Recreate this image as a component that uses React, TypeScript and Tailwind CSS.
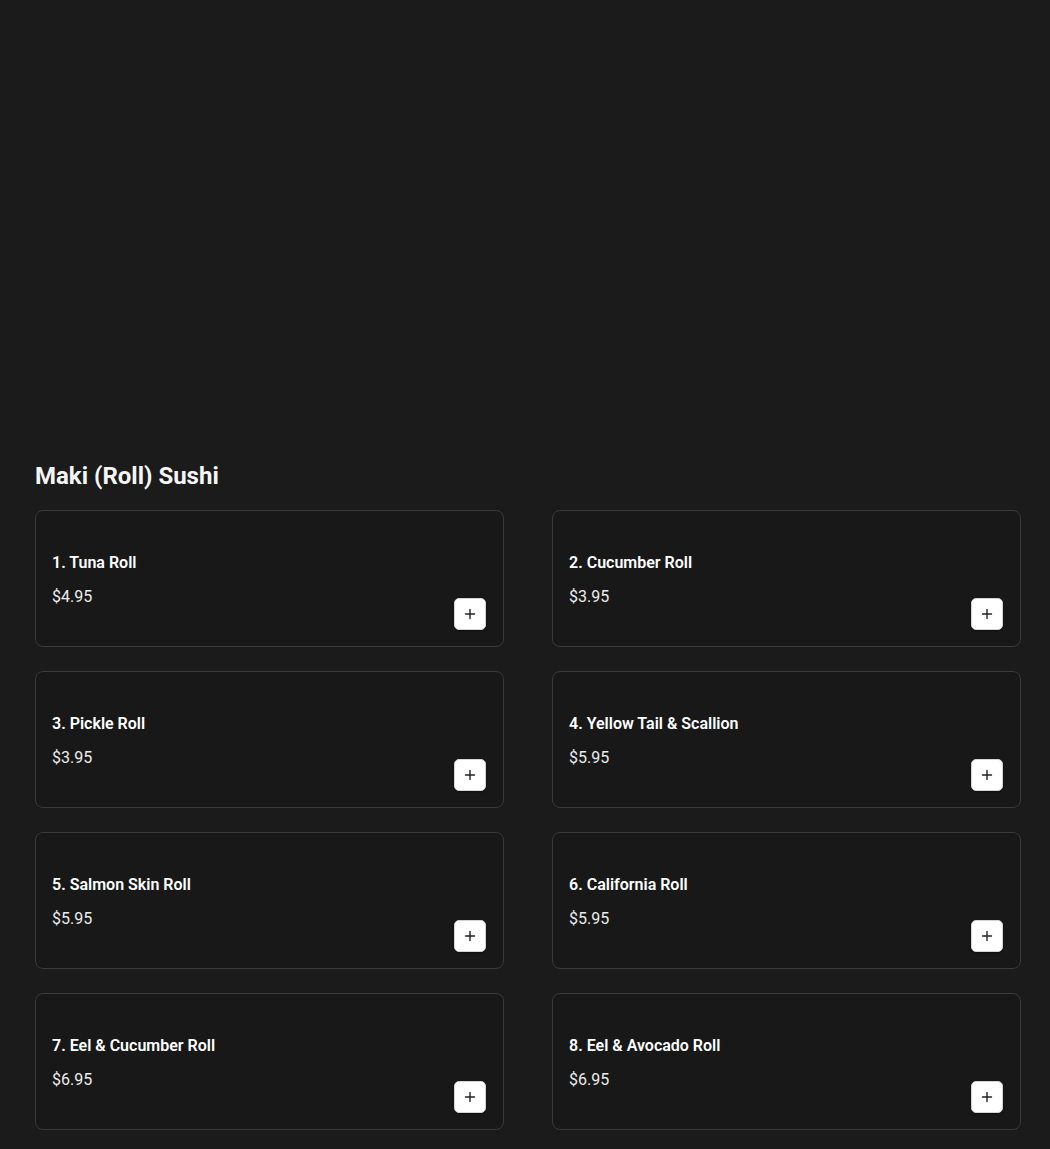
import React from "react";

const items = [
  { name: "1. Tuna Roll", price: "$4.95" },
  { name: "2. Cucumber Roll", price: "$3.95" },
  { name: "3. Pickle Roll", price: "$3.95" },
  { name: "4. Yellow Tail & Scallion", price: "$5.95" },
  { name: "5. Salmon Skin Roll", price: "$5.95" },
  { name: "6. California Roll", price: "$5.95" },
  { name: "7. Eel & Cucumber Roll", price: "$6.95" },
  { name: "8. Eel & Avocado Roll", price: "$6.95" },
];

export default function App() {
  return (
    <div className="min-h-[1149px] bg-[#1b1b1b] text-white" style={{ fontFamily: "Roboto, 'Noto Sans', sans-serif" }}>
      <div className="h-[460px]" />
      <div className="pl-[35px] pr-[29px]">
        <h2 className="text-[24px] leading-[32px] font-bold text-[#f5f5f5]">Maki (Roll) Sushi</h2>
        <div className="mt-[18px] grid grid-cols-2 gap-x-[48px] gap-y-[24px]">
          {items.map((it) => (
            <div
              key={it.name}
              className="h-[137px] rounded-[8px] border border-[#3a3a3a] bg-[#181818] pl-4 pr-[16px] pt-4 pb-4 flex justify-between"
            >
              <div className="pt-[24px]">
                <div className="text-[16px] leading-[24px] font-semibold text-white">{it.name}</div>
                <div className="mt-[10px] text-[16px] leading-[24px] text-[#ececec]">{it.price}</div>
              </div>
              <button className="self-end mr-[1px] w-[32px] h-[32px] rounded-[5px] bg-white border border-[#d4d4d4] flex items-center justify-center shadow-[0_1px_2px_rgba(0,0,0,0.4)]">
                <svg width="12" height="12" viewBox="0 0 12 12" fill="none">
                  <path d="M6 1.5v9M1.5 6h9" stroke="#222" strokeWidth="1.4" strokeLinecap="round" />
                </svg>
              </button>
            </div>
          ))}
        </div>
      </div>
    </div>
  );
}
